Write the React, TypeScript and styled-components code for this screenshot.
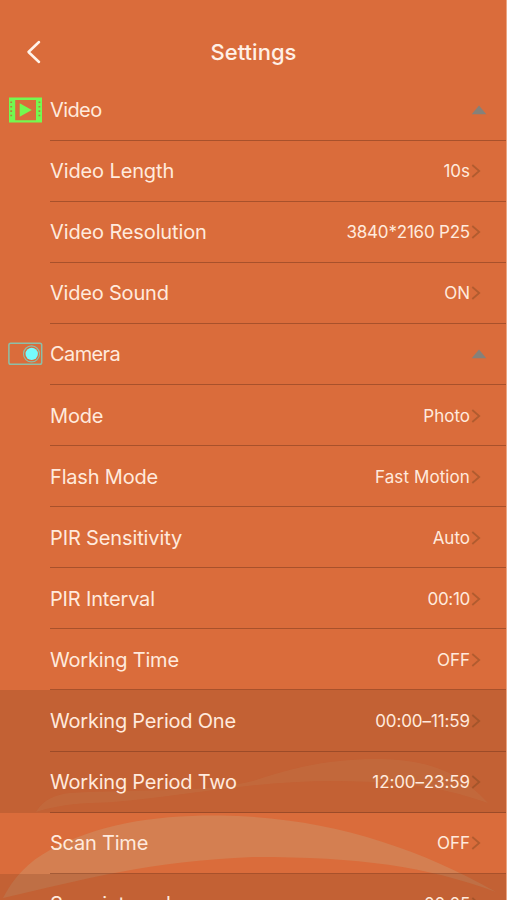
import React from "react";
import styled, { createGlobalStyle } from "styled-components";

const GlobalStyle = createGlobalStyle`
  html, body { margin: 0; padding: 0; height: 100%; overflow: hidden; }
  body { background: #da6c3b; }
`;

const Screen = styled.main`
  position: relative;
  box-sizing: border-box;
  width: 507px;
  height: 900px;
  overflow: hidden;
  background: #da6c3b;
  border-right: 1px solid #eba684;
  color: #ffeadd;
  font-family: Inter, "Liberation Sans", sans-serif;
  font-feature-settings: "calt" 0;
`;

const Waves = styled.svg`
  position: absolute;
  left: 0;
  bottom: 0;
  width: 507px;
  height: 150px;
`;

const Content = styled.div`
  position: relative;
`;

const Header = styled.header`
  display: grid;
  grid-template-columns: 50px 1fr 50px;
  align-items: center;
  height: 55px;
  padding-top: 24.5px;
`;

const BackButton = styled.button`
  display: flex;
  margin: 0;
  padding: 0 0 0 26px;
  border: 0;
  background: none;
  color: #fff3ea;
`;

const Title = styled.h1`
  margin: 0;
  padding-left: 1px;
  text-align: center;
  font-size: 22px;
  line-height: 26px;
  font-weight: 500;
  letter-spacing: 0;
  color: #fff0e6;
`;

const List = styled.div`
  display: flex;
  flex-direction: column;
`;

const Row = styled.div<{ $dim?: boolean }>`
  display: grid;
  grid-template-columns: 50px 1fr;
  height: 61.1px;
  background: ${(p) => (p.$dim ? "rgba(122, 60, 32, 0.23)" : "transparent")};
`;

const IconCell = styled.div`
  display: flex;
  align-items: center;
  padding-left: 8px;
`;

const RowBody = styled.div`
  display: flex;
  align-items: center;
  justify-content: space-between;
  box-sizing: border-box;
  padding-top: 1px;
  padding-right: 25px;
  border-bottom: 1.5px solid rgba(112, 52, 28, 0.48);
  white-space: nowrap;
`;

const Label = styled.span<{ $tracking?: number }>`
  font-size: 20px;
  letter-spacing: ${(p) => p.$tracking ?? 0}px;
`;

const ValueGroup = styled.span`
  display: flex;
  align-items: center;
`;

const Value = styled.span<{ $tracking?: number }>`
  font-size: 17px;
  letter-spacing: ${(p) => p.$tracking ?? 0}px;
`;

const SectionArrow = styled.svg`
  margin-right: -6px;
`;

const VideoIcon = () => (
  <svg width="34" height="26" viewBox="0 0 34 26">
    <path
      fillRule="evenodd"
      fill="#74f950"
      d="M1 0.5H34V25.5H1ZM7.2 3V23.2H28V3Z"
    />
    <path fill="#74f950" d="M11.7 6.3V19.7L23.8 13Z" />
    <path
      stroke="#a98a3c"
      strokeWidth="1.8"
      strokeDasharray="1.6 2.8"
      d="M3.2 4.5V22M31.4 4.5V22"
    />
  </svg>
);

const CameraIcon = () => (
  <svg width="35" height="24" viewBox="0 0 35 24" fill="none">
    <rect x="0.9" y="1.3" width="32.8" height="21" rx="1.8" stroke="#8dbfa8" strokeWidth="1.5" />
    <circle cx="23.5" cy="11.9" r="8" stroke="#8dbfa8" strokeWidth="1.1" />
    <circle cx="23.7" cy="11.9" r="6.2" fill="#75fbfd" />
  </svg>
);

const Chevron = () => (
  <svg width="11" height="16" viewBox="0 0 11 16" fill="none">
    <path d="M2.3 2L9.2 8L2.3 14" stroke="#7a4420" strokeOpacity="0.42" strokeWidth="1.8" />
  </svg>
);

type Setting = { label: string; value: string; dim?: boolean; lt?: number; vt?: number };

const videoSettings: Setting[] = [
  { label: "Video Length", value: "10s", lt: -0.12 },
  { label: "Video Resolution", value: "3840*2160 P25", lt: -0.13, vt: -0.2 },
  { label: "Video Sound", value: "ON", lt: -0.2 },
];

const cameraSettings: Setting[] = [
  { label: "Mode", value: "Photo", lt: -0.15 },
  { label: "Flash Mode", value: "Fast Motion", lt: -0.18, vt: 0.1 },
  { label: "PIR Sensitivity", value: "Auto", lt: -0.13 },
  { label: "PIR Interval", value: "00:10", lt: -0.17, vt: -0.3 },
  { label: "Working Time", value: "OFF", lt: -0.17 },
  { label: "Working Period One", value: "00:00–11:59", dim: true, lt: -0.21, vt: -0.1 },
  { label: "Working Period Two", value: "12:00–23:59", dim: true, lt: -0.21, vt: -0.1 },
  { label: "Scan Time", value: "OFF", lt: -0.22 },
  { label: "Scan interval", value: "00:05", dim: true, lt: -0.17, vt: -0.3 },
];

type SectionProps = { label: string; icon: React.ReactNode; tracking: number };

const SectionRow = ({ label, icon, tracking }: SectionProps) => (
  <Row>
    <IconCell>{icon}</IconCell>
    <RowBody>
      <Label $tracking={tracking}>{label}</Label>
      <SectionArrow width="16" height="10" viewBox="0 0 16 10">
        <path d="M8 0.5L15.3 9.2H0.7Z" fill="#85817a" />
      </SectionArrow>
    </RowBody>
  </Row>
);

const SettingRow = ({ label, value, dim, lt, vt }: Setting) => (
  <Row $dim={dim}>
    <span />
    <RowBody>
      <Label $tracking={lt}>{label}</Label>
      <ValueGroup>
        <Value $tracking={vt}>{value}</Value>
        <Chevron />
      </ValueGroup>
    </RowBody>
  </Row>
);

export default function App() {
  return (
    <>
      <GlobalStyle />
      <Screen>
        <Waves viewBox="0 750 507 150">
          <path
            fill="#d47f51"
            d="M3 898C14 877 28 862 50 850C98 824 154 815 220 815.5C325 817 415 846 496 892C425 866 360 857 253 857C150 861 85 879 3 898Z"
          />
          <path
            fill="#d87a48"
            fillOpacity="0.75"
            d="M36 812C44 799 55 795 70 793C145 789 206 793 253 781C300 765 335 759 380 759C435 760 463 776 488 803C435 784 393 782 340 781C240 780 165 801 90 803C65 804 48 808 36 812Z"
          />
        </Waves>
        <Content>
          <Header>
            <BackButton aria-label="Back">
              <svg width="16" height="24" viewBox="0 0 16 24" fill="none">
                <path
                  d="M13 2L2.5 12L13 22"
                  stroke="currentColor"
                  strokeWidth="2.5"
                  strokeLinecap="round"
                  strokeLinejoin="round"
                />
              </svg>
            </BackButton>
            <Title>Settings</Title>
          </Header>
          <List>
            <SectionRow label="Video" icon={<VideoIcon />} tracking={-0.6} />
            {videoSettings.map((s) => (
              <SettingRow key={s.label} {...s} />
            ))}
            <SectionRow label="Camera" icon={<CameraIcon />} tracking={-0.6} />
            {cameraSettings.map((s) => (
              <SettingRow key={s.label} {...s} />
            ))}
          </List>
        </Content>
      </Screen>
    </>
  );
}
